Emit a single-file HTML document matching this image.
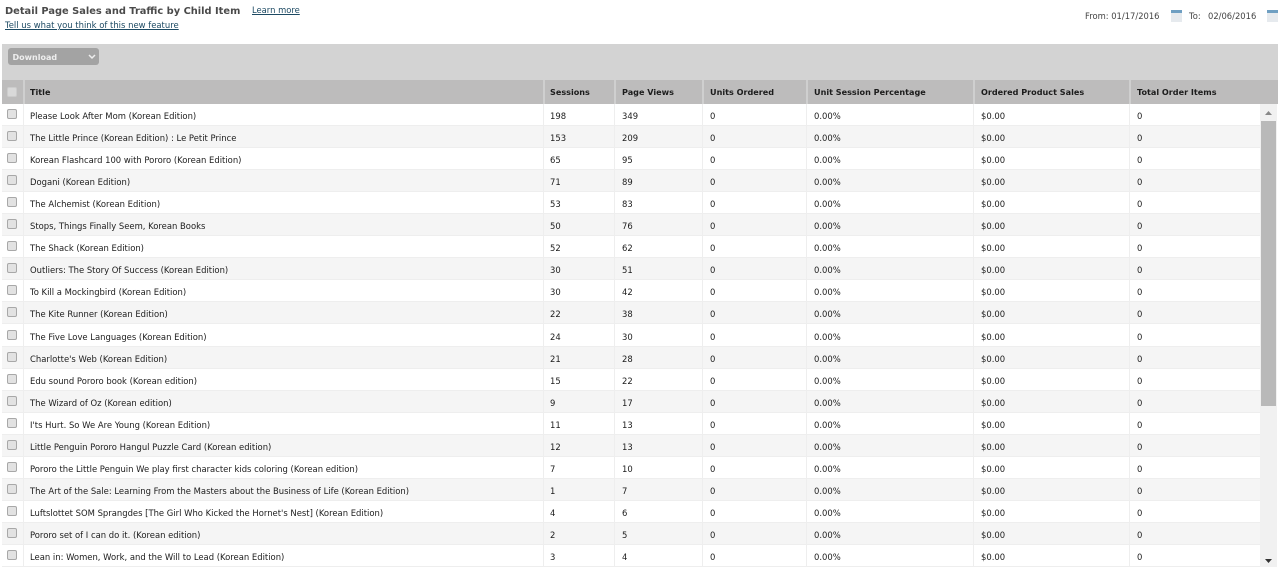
<!DOCTYPE html>
<html><head><meta charset="utf-8"><style>
html,body{margin:0;padding:0;width:1280px;height:567px;overflow:hidden;background:#fff;font-family:"DejaVu Sans",Verdana,sans-serif;color:#222}
.a{position:absolute;white-space:nowrap}
a{color:#1d4a63;text-decoration:underline}
#tb{position:absolute;left:2px;top:44px;width:1276px;height:36px;background:#d3d3d3}
#dl{position:absolute;left:8px;top:48px;width:91px;height:17px;background:#a3a3a3;border-radius:3px;color:#eee;font-weight:bold;font-size:8px;line-height:19px;text-indent:4.5px}
#hd{position:absolute;left:2px;top:80px;width:1276px;height:24px;background:#bdbcbc;font-weight:bold;font-size:8.1px;line-height:24px;color:#1c1c1c}
.r{position:absolute;left:2px;width:1259px;height:22.05px;font-size:8.43px;line-height:24px;color:#1c1c1c;border-bottom:1px solid #eee;box-sizing:border-box}
.r:nth-child(even){background:#f5f5f5}
.c{position:absolute;top:0;white-space:nowrap}
.c1{left:28px}.c2{left:548px}.c3{left:620px}.c4{left:708px}.c5{left:812px}.c6{left:979px}.c7{left:1135px}
.s{position:absolute;top:0;bottom:0;width:1px;background:#eee;z-index:2}
.h{position:absolute;top:0;bottom:0;width:2px;background:#cfcfcf;z-index:2}
.k{position:absolute;left:5px;top:5px;width:8px;height:8px;border:1px solid #a8a8a8;border-radius:2px;background:#e2e2e2}
.cal{position:absolute;top:10px;width:11px;height:12px;background:#e6eaee}
.cal:before{content:"";position:absolute;left:0;top:0;width:11px;height:3px;background:#6f9fc2}
</style></head><body>
<div class="a" style="left:5px;top:5px;font-size:9.85px;line-height:14px;font-weight:bold;color:#4a4a4a">Detail Page Sales and Traffic by Child Item</div>
<div class="a" style="left:252px;top:5px;font-size:8.4px;line-height:11px"><a>Learn more</a></div>
<div class="a" style="left:5px;top:20px;font-size:8.45px;line-height:11px"><a>Tell us what you think of this new feature</a></div>
<div class="a" style="left:1085px;top:11px;font-size:8.4px;line-height:11px;color:#444">From: 01/17/2016</div>
<div class="cal" style="left:1171px"></div>
<div class="a" style="left:1189px;top:11px;font-size:8.4px;line-height:11px;color:#444">To:</div>
<div class="a" style="left:1208px;top:11px;font-size:8.4px;line-height:11px;color:#444">02/06/2016</div>
<div class="cal" style="left:1267px"></div>
<div id="tb"></div>
<div id="dl">Download<svg style="position:absolute;left:80px;top:6px" width="8" height="6" viewBox="0 0 8 6"><path d="M1 1l3 3 3-3" fill="none" stroke="#eee" stroke-width="1.5"/></svg></div>
<div id="hd">
<i class="k" style="top:7px;background:#d9d9d9;border-color:#ccc"></i>
<span class="c c1">Title</span><span class="c c2">Sessions</span><span class="c c3">Page Views</span><span class="c c4">Units Ordered</span><span class="c c5">Unit Session Percentage</span><span class="c c6">Ordered Product Sales</span><span class="c c7">Total Order Items</span>
<i class="h" style="left:21px"></i><i class="h" style="left:541px"></i><i class="h" style="left:612px"></i><i class="h" style="left:700px"></i><i class="h" style="left:804px"></i><i class="h" style="left:971px"></i><i class="h" style="left:1127px"></i>
</div>
<div style="position:absolute;left:0;top:104px;width:1280px;height:463px;overflow:hidden">
<div style="position:absolute;left:0;top:-104px;width:1280px;height:567px">
<div class="r" style="top:104px"><i class="k"></i><span class="c c1">Please Look After Mom (Korean Edition)</span><span class="c c2">198</span><span class="c c3">349</span><span class="c c4">0</span><span class="c c5">0.00%</span><span class="c c6">$0.00</span><span class="c c7">0</span></div>
<div class="r" style="top:126.05px"><i class="k"></i><span class="c c1">The Little Prince (Korean Edition) : Le Petit Prince</span><span class="c c2">153</span><span class="c c3">209</span><span class="c c4">0</span><span class="c c5">0.00%</span><span class="c c6">$0.00</span><span class="c c7">0</span></div>
<div class="r" style="top:148.1px"><i class="k"></i><span class="c c1">Korean Flashcard 100 with Pororo (Korean Edition)</span><span class="c c2">65</span><span class="c c3">95</span><span class="c c4">0</span><span class="c c5">0.00%</span><span class="c c6">$0.00</span><span class="c c7">0</span></div>
<div class="r" style="top:170.15px"><i class="k"></i><span class="c c1">Dogani (Korean Edition)</span><span class="c c2">71</span><span class="c c3">89</span><span class="c c4">0</span><span class="c c5">0.00%</span><span class="c c6">$0.00</span><span class="c c7">0</span></div>
<div class="r" style="top:192.2px"><i class="k"></i><span class="c c1">The Alchemist (Korean Edition)</span><span class="c c2">53</span><span class="c c3">83</span><span class="c c4">0</span><span class="c c5">0.00%</span><span class="c c6">$0.00</span><span class="c c7">0</span></div>
<div class="r" style="top:214.25px"><i class="k"></i><span class="c c1">Stops, Things Finally Seem, Korean Books</span><span class="c c2">50</span><span class="c c3">76</span><span class="c c4">0</span><span class="c c5">0.00%</span><span class="c c6">$0.00</span><span class="c c7">0</span></div>
<div class="r" style="top:236.3px"><i class="k"></i><span class="c c1">The Shack (Korean Edition)</span><span class="c c2">52</span><span class="c c3">62</span><span class="c c4">0</span><span class="c c5">0.00%</span><span class="c c6">$0.00</span><span class="c c7">0</span></div>
<div class="r" style="top:258.35px"><i class="k"></i><span class="c c1">Outliers: The Story Of Success (Korean Edition)</span><span class="c c2">30</span><span class="c c3">51</span><span class="c c4">0</span><span class="c c5">0.00%</span><span class="c c6">$0.00</span><span class="c c7">0</span></div>
<div class="r" style="top:280.4px"><i class="k"></i><span class="c c1">To Kill a Mockingbird (Korean Edition)</span><span class="c c2">30</span><span class="c c3">42</span><span class="c c4">0</span><span class="c c5">0.00%</span><span class="c c6">$0.00</span><span class="c c7">0</span></div>
<div class="r" style="top:302.45px"><i class="k"></i><span class="c c1">The Kite Runner (Korean Edition)</span><span class="c c2">22</span><span class="c c3">38</span><span class="c c4">0</span><span class="c c5">0.00%</span><span class="c c6">$0.00</span><span class="c c7">0</span></div>
<div class="r" style="top:324.5px"><i class="k"></i><span class="c c1">The Five Love Languages (Korean Edition)</span><span class="c c2">24</span><span class="c c3">30</span><span class="c c4">0</span><span class="c c5">0.00%</span><span class="c c6">$0.00</span><span class="c c7">0</span></div>
<div class="r" style="top:346.55px"><i class="k"></i><span class="c c1">Charlotte's Web (Korean Edition)</span><span class="c c2">21</span><span class="c c3">28</span><span class="c c4">0</span><span class="c c5">0.00%</span><span class="c c6">$0.00</span><span class="c c7">0</span></div>
<div class="r" style="top:368.6px"><i class="k"></i><span class="c c1">Edu sound Pororo book (Korean edition)</span><span class="c c2">15</span><span class="c c3">22</span><span class="c c4">0</span><span class="c c5">0.00%</span><span class="c c6">$0.00</span><span class="c c7">0</span></div>
<div class="r" style="top:390.65px"><i class="k"></i><span class="c c1">The Wizard of Oz (Korean edition)</span><span class="c c2">9</span><span class="c c3">17</span><span class="c c4">0</span><span class="c c5">0.00%</span><span class="c c6">$0.00</span><span class="c c7">0</span></div>
<div class="r" style="top:412.7px"><i class="k"></i><span class="c c1">I'ts Hurt. So We Are Young (Korean Edition)</span><span class="c c2">11</span><span class="c c3">13</span><span class="c c4">0</span><span class="c c5">0.00%</span><span class="c c6">$0.00</span><span class="c c7">0</span></div>
<div class="r" style="top:434.75px"><i class="k"></i><span class="c c1">Little Penguin Pororo Hangul Puzzle Card (Korean edition)</span><span class="c c2">12</span><span class="c c3">13</span><span class="c c4">0</span><span class="c c5">0.00%</span><span class="c c6">$0.00</span><span class="c c7">0</span></div>
<div class="r" style="top:456.8px"><i class="k"></i><span class="c c1">Pororo the Little Penguin We play first character kids coloring (Korean edition)</span><span class="c c2">7</span><span class="c c3">10</span><span class="c c4">0</span><span class="c c5">0.00%</span><span class="c c6">$0.00</span><span class="c c7">0</span></div>
<div class="r" style="top:478.85px"><i class="k"></i><span class="c c1">The Art of the Sale: Learning From the Masters about the Business of Life (Korean Edition)</span><span class="c c2">1</span><span class="c c3">7</span><span class="c c4">0</span><span class="c c5">0.00%</span><span class="c c6">$0.00</span><span class="c c7">0</span></div>
<div class="r" style="top:500.9px"><i class="k"></i><span class="c c1">Luftslottet SOM Sprangdes [The Girl Who Kicked the Hornet's Nest] (Korean Edition)</span><span class="c c2">4</span><span class="c c3">6</span><span class="c c4">0</span><span class="c c5">0.00%</span><span class="c c6">$0.00</span><span class="c c7">0</span></div>
<div class="r" style="top:522.95px"><i class="k"></i><span class="c c1">Pororo set of I can do it. (Korean edition)</span><span class="c c2">2</span><span class="c c3">5</span><span class="c c4">0</span><span class="c c5">0.00%</span><span class="c c6">$0.00</span><span class="c c7">0</span></div>
<div class="r" style="top:545px"><i class="k"></i><span class="c c1">Lean in: Women, Work, and the Will to Lead (Korean Edition)</span><span class="c c2">3</span><span class="c c3">4</span><span class="c c4">0</span><span class="c c5">0.00%</span><span class="c c6">$0.00</span><span class="c c7">0</span></div>
</div></div>
<i class="s" style="position:absolute;left:23px;top:104px;height:463px"></i><i class="s" style="position:absolute;left:543px;top:104px;height:463px"></i><i class="s" style="position:absolute;left:614px;top:104px;height:463px"></i><i class="s" style="position:absolute;left:702px;top:104px;height:463px"></i><i class="s" style="position:absolute;left:806px;top:104px;height:463px"></i><i class="s" style="position:absolute;left:973px;top:104px;height:463px"></i><i class="s" style="position:absolute;left:1129px;top:104px;height:463px"></i>
<div style="position:absolute;left:1260px;top:104px;width:17px;height:463px;background:#f1f1f1"></div>
<div style="position:absolute;left:1261px;top:121px;width:15px;height:285px;background:#b9b9b9"></div>
<svg style="position:absolute;left:1264px;top:110px" width="9" height="6"><path d="M4.5 1L8 5H1z" fill="#888"/></svg>
<svg style="position:absolute;left:1264px;top:558px" width="9" height="6"><path d="M1 1h7L4.5 5z" fill="#333"/></svg>
</body></html>
